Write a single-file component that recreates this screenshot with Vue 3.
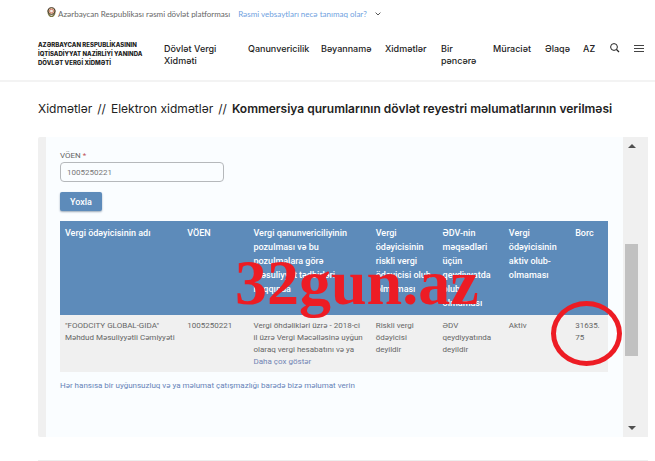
<template>
    <div class="page">
        <div class="platform-bar">
            <svg class="emblem" viewBox="0 0 18 20" aria-hidden="true">
                <path d="M3 5 Q1 12 5 17 Q9 21 13 17 Q17 12 15 5" fill="none" stroke="#77743f" stroke-width="3" />
                <circle cx="9" cy="8" r="7" fill="#d9b98c" stroke="#4d4038" stroke-width="2" />
                <circle cx="9" cy="8" r="4" fill="#c8545a" />
                <circle cx="9" cy="8" r="3" fill="#f6efe4" />
            </svg>
            <span class="platform-name">Azərbaycan Respublikası rəsmi dövlət platforması</span>
            <a href="#" class="platform-link">Rəsmi vebsaytları necə tanımaq olar?</a>
            <svg class="chevron" viewBox="0 0 6 4" aria-hidden="true">
                <path d="M.6 .6 L3 3 L5.400 .6" fill="none" stroke="#444" stroke-width=".9" />
            </svg>
        </div>

        <header class="header">
            <a href="#" class="brand">AZƏRBAYCAN RESPUBLİKASININ<br>İQTİSADİYYAT NAZİRLİYİ YANINDA<br>DÖVLƏT VERGİ XİDMƏTİ</a>
            <a v-for="item in menu" :key="item" href="#" class="nav-link">{{ item }}</a>
            <button type="button" class="icon-button" aria-label="Axtar">
                <svg width="10" height="10" viewBox="0 0 10 10">
                    <circle cx="4" cy="4" r="3.400" fill="none" stroke="#222" />
                    <path d="M6.500 6.500 L9 9" stroke="#222" stroke-width="1.200" />
                </svg>
            </button>
            <button type="button" class="icon-button" aria-label="Menyu">
                <svg width="10" height="10" viewBox="0 0 10 10">
                    <path d="M0 2.500 H10 M0 5.500 H10 M0 8.500 H10" stroke="#444" />
                </svg>
            </button>
        </header>

        <nav class="breadcrumb">
            <a href="#">Xidmətlər</a>
            <span>//</span>
            <a href="#">Elektron xidmətlər</a>
            <span>//</span>
            <strong>Kommersiya qurumlarının dövlət reyestri məlumatlarının verilməsi</strong>
        </nav>

        <main class="panel">
            <div class="panel-content">
                <form @submit.prevent>
                    <label for="voen">VÖEN <span class="required">*</span></label>
                    <input id="voen" v-model="voen" type="text">
                    <button type="submit" class="check-button">Yoxla</button>
                </form>

                <table>
                    <colgroup>
                        <col v-for="column in columns" :key="column.title" :style="{ width: `${column.width}%` }">
                    </colgroup>
                    <thead>
                        <tr>
                            <th v-for="column in columns" :key="column.title">{{ column.title }}</th>
                        </tr>
                    </thead>
                    <tbody>
                        <tr>
                            <td>"FOODCITY GLOBAL-GIDA"<br>Məhdud Məsuliyyətli Cəmiyyəti</td>
                            <td>1005250221</td>
                            <td>
                                Vergi öhdəlikləri üzrə - 2018-ci<br>il üzrə Vergi Məcəlləsinə uyğun<br>olaraq vergi hesabatını və ya
                                <a href="#" class="more">Daha çox göstər</a>
                            </td>
                            <td>Riskli vergi<br>ödəyicisi<br>deyildir</td>
                            <td>ƏDV<br>qeydiyyatında<br>deyildir</td>
                            <td>Aktiv</td>
                            <td>31635.<br>75</td>
                        </tr>
                    </tbody>
                </table>

                <a href="#" class="report">Hər hansısa bir uyğunsuzluq və ya məlumat çatışmazlığı barədə bizə məlumat verin</a>
            </div>

            <div class="scrollbar" aria-hidden="true">
                <span class="arrow up"></span>
                <span class="thumb"></span>
                <span class="arrow down"></span>
            </div>

            <span class="watermark">32gun.az</span>
            <span class="debt-mark"></span>
        </main>

        <hr>
    </div>
</template>

<script setup>
import { ref } from 'vue';
const voen = ref('1005250221');
const menu = ['Dövlət Vergi Xidməti', 'Qanunvericilik', 'Bəyannamə', 'Xidmətlər', 'Bir pəncərə', 'Müraciət', 'Əlaqə', 'AZ'];
const columns = [
    { title: 'Vergi ödəyicisinin adı', width: 22.3 },
    { title: 'VÖEN', width: 12.1 },
    { title: 'Vergi qanunvericiliyinin\npozulması və bu\npozulmalara görə\nməsuliyyət tədbirləri\nhaqqında', width: 22.3 },
    { title: 'Vergi\nödəyicisinin\nriskli vergi\nödəyicisi olub-\nolmaması', width: 12.2 },
    { title: 'ƏDV-nin\nməqsədləri\nüçün\nqeydiyyatda\nolub-\nolmaması', width: 12.1 },
    { title: 'Vergi\nödəyicisinin\naktiv olub-\nolmaması', width: 12.1 },
    { title: 'Borc', width: 6.9 },
];
</script>

<style>
body {
    background: #fff;
}
</style>

<style scoped>
.page {
    font-family: Inter, sans-serif;
    color: #222;
}

a {
    color: inherit;
    text-decoration: none;
}

.platform-bar {
    display: flex;
    align-items: center;
    height: 27px;
    padding-left: 47px;
    font-family: Lato, sans-serif;
    font-size: 8px;
    white-space: nowrap;
}

.emblem {
    width: 9px;
    height: 10px;
    margin-right: 2px;
    margin-bottom: 3px;
}

.platform-name {
    color: #666;
}

.platform-link {
    margin-left: 8px;
    color: #6f9fe0;
}

.chevron {
    width: 6px;
    height: 4px;
    margin-left: 8px;
}

.header {
    display: grid;
    grid-template-columns: 126fr 84fr 73fr 64fr 56fr 52fr 52fr 38fr 27fr 24fr 14fr;
    align-items: start;
    height: 40px;
    padding: 13px 7px 0 38px;
    border-bottom: 2px solid #f3f3f3;
}

.brand {
    font-size: 6px;
    font-weight: 800;
    line-height: 9px;
    white-space: nowrap;
}

.nav-link {
    padding-top: 3px;
    padding-right: 10px;
    font-size: 9px;
    font-weight: 500;
    line-height: 12px;
}

.icon-button {
    display: flex;
    height: 16px;
    padding: 3px 0 0;
    border: none;
    background: none;
}

.breadcrumb {
    display: flex;
    gap: 5px;
    padding: 19px 7px 20px 38px;
    font-size: 12px;
    line-height: 16px;
    white-space: nowrap;
}

.breadcrumb strong {
    font-weight: 600;
}

.panel {
    position: relative;
    display: flex;
    margin: 0 7px 0 38px;
    border-left: 8px solid #f0f0f0;
    border-radius: 2px;
    background: #fafdff;
    font-family: Roboto, sans-serif;
    font-size: 8px;
}

.panel-content {
    flex: 1;
    padding: 13px 15px 44px 14px;
}

form {
    display: flex;
    flex-direction: column;
    align-items: flex-start;
}

label {
    color: #666;
    line-height: 12px;
}

.required {
    color: #c0565c;
}

input {
    box-sizing: border-box;
    width: 30%;
    height: 20px;
    padding: 0 6px;
    border: 1px solid #b5b8bb;
    border-radius: 4px;
    background: transparent;
    color: #777;
    font-family: inherit;
    font-size: 8px;
}

.check-button {
    height: 19px;
    margin: 10px 0;
    padding: 0 10px;
    border: none;
    border-radius: 2px;
    background: #5d8bba;
    box-shadow: 0 1px 2px #9aa9b8;
    color: #fff;
    font-family: inherit;
    font-size: 9px;
    font-weight: 500;
}

table {
    width: 100%;
    table-layout: fixed;
    border-collapse: collapse;
    text-align: left;
}

th {
    padding: 5px 0 5px 5px;
    background: #5d8bba;
    color: #fff;
    font-size: 9px;
    font-weight: 500;
    line-height: 14px;
    vertical-align: top;
    white-space: pre;
}

td {
    padding: 5px 0 5px 5px;
    background: #f0f0f0;
    color: #666;
    line-height: 12px;
    vertical-align: top;
}

.more {
    display: block;
    color: #7184b4;
    line-height: 11px;
}

.report {
    display: block;
    margin-top: 7px;
    color: #6683b8;
    line-height: 14px;
}

.scrollbar {
    display: flex;
    flex-direction: column;
    justify-content: space-between;
    width: 13px;
    padding: 7px 10px 7px 2px;
    background: #f0f0f0;
}

.arrow {
    align-self: center;
    border: 4px solid transparent;
}

.up {
    border-top: 0;
    border-bottom-color: #505050;
}

.down {
    border-bottom: 0;
    border-top-color: #505050;
}

.thumb {
    height: 112px;
    margin-top: 26px;
    background: #c1c1c1;
}

.watermark {
    position: absolute;
    top: 110px;
    left: 189px;
    color: #ed1c24;
    font-family: "Liberation Serif", serif;
    font-size: 64px;
    font-weight: 700;
    line-height: 72px;
}

.debt-mark {
    position: absolute;
    top: 164px;
    left: 505px;
    box-sizing: border-box;
    width: 71px;
    height: 65px;
    border: 5px solid #ed1c24;
    border-radius: 50%;
}

hr {
    margin: 23px 7px 0 38px;
    border: none;
    border-top: 1px solid #eee;
}
</style>
